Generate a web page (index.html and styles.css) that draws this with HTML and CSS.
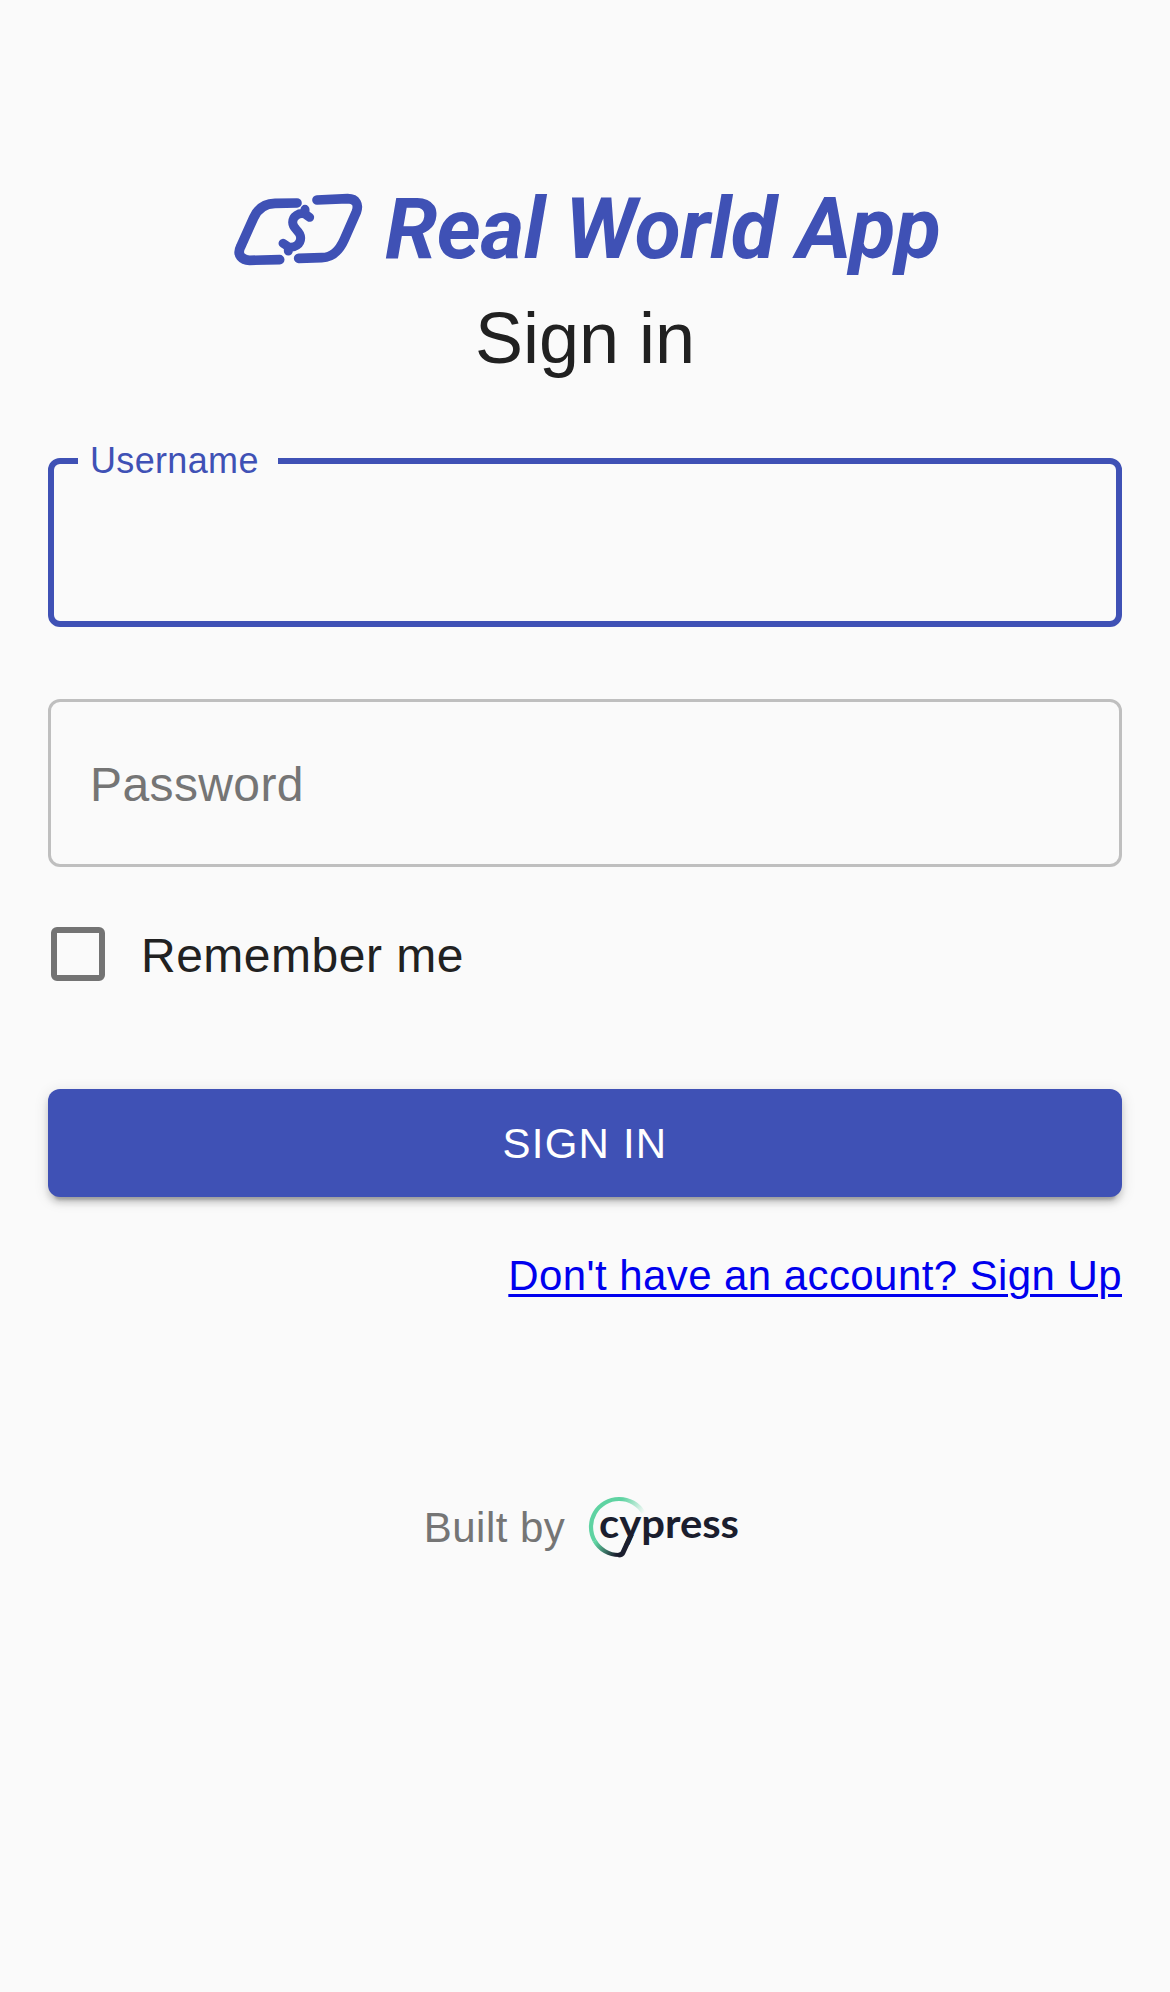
FILE: index.html
```html
<!DOCTYPE html>
<html lang="en">
<head>
<meta charset="utf-8">
<title>Real World App</title>
<link rel="stylesheet" href="styles.css">
</head>
<body>
<main class="page">
  <svg class="brand" viewBox="0 0 720 100" role="img" aria-label="Real World App">
    <g class="brand-mark" transform="scale(.33333)">
      <path d="M216 69 L150 70 C118 71 98 86 86 113 L47 200 C34 226 52 240 74 241 L164 239"/>
      <path d="M276 60 L368 56 C394 56 402 74 394 96 L358 178 C342 214 322 232 290 233 L221 235"/>
      <path class="dollar" d="M254 112 L240 102 C222 97 203 108 203 127 C203 150 227 150 227 174 C227 194 208 204 191 201 L174 190 M240 88 V102 M190 213 V200"/>
    </g>
    <text class="brand-name" x="160" y="78.3" textLength="556">Real World App</text>
  </svg>
  <h1 class="title">Sign in</h1>
  <form class="form">
    <div class="field field-focused"><label class="field-label">Username</label></div>
    <div class="field"><label class="field-label">Password</label></div>
    <label class="remember"><span class="checkbox"></span><span class="remember-text">Remember me</span></label>
    <button class="submit" type="button">Sign In</button>
    <a class="signup" href="#">Don't have an account? Sign Up</a>
  </form>
  <footer class="footer">
    <span class="built">Built by</span>
    <svg class="cypress" viewBox="0 0 156 66" role="img" aria-label="cypress">
      <defs>
        <linearGradient id="fade" gradientUnits="userSpaceOnUse" x1="36" y1="4" x2="58" y2="18">
          <stop offset="0" stop-color="#5fd3a2"/><stop offset="1" stop-color="#5fd3a2" stop-opacity="0"/>
        </linearGradient>
        <linearGradient id="deep" gradientUnits="userSpaceOnUse" x1="9" y1="48" x2="30" y2="60">
          <stop offset="0" stop-color="#5fd3a2"/><stop offset="1" stop-color="#1b1e2e"/>
        </linearGradient>
      </defs>
      <g transform="translate(0 -1)">
        <path class="ring" stroke="url(#fade)" d="M32 5 A28 28 0 0 1 56.500 19"/>
        <path class="ring" stroke="#5fd3a2" d="M7.750 47 A28 28 0 0 1 32.100 5"/>
        <path class="ring" stroke="url(#deep)" d="M7.700 46.900 A28 28 0 0 0 32 61"/>
        <path class="tail" d="M44.500 40 L36 58.500 Q35 61 31.500 61"/>
      </g>
      <text class="cypress-name" x="12" y="43.3" textLength="140" lengthAdjust="spacingAndGlyphs">cypress</text>
    </svg>
  </footer>
</main>
</body>
</html>
```
FILE: styles.css
```css
* { box-sizing: border-box; }
body { margin: 0; background: #fafafa; color: #212121; font-family: "Liberation Sans", Arial, sans-serif; }
.page { min-height: 1992px; padding: 180px 48px 0; display: flex; flex-direction: column; align-items: center; }
.brand { width: 720px; height: 100px; flex: none; }
.brand-mark { fill: none; stroke: #3f51b5; stroke-width: 29; stroke-linecap: round; stroke-linejoin: round; }
.dollar { stroke-width: 27; }
.brand-name { font: italic 700 84.4px Roboto, sans-serif; fill: #3f51b5; }
.title { margin: 10px 0 0; font-size: 72px; font-weight: 400; line-height: 96px; }
.form { width: 100%; margin-top: 72px; display: flex; flex-direction: column; }
.field { height: 168px; margin-bottom: 60px; padding: 3px 39px 0; display: flex; align-items: center; border: 3px solid #bfbfbf; border-radius: 12px; }
.field-label { font-size: 48px; line-height: 48px; letter-spacing: .4px; color: #757575; }
.field-focused { position: relative; height: 169px; margin-bottom: 72px; border: 6px solid #3f51b5; }
.field-focused .field-label { position: absolute; left: 24px; top: -24px; width: 200px; padding-left: 12px; background: #fafafa; font-size: 36px; line-height: 42px; letter-spacing: .34px; color: #3f51b5; }
.remember { display: flex; align-items: center; height: 54px; padding-left: 3px; gap: 36px; }
.checkbox { width: 54px; height: 54px; border: 6px solid #737373; border-radius: 6px; }
.remember-text { padding-top: 3px; font-size: 48px; line-height: 72px; letter-spacing: .5px; }
.submit { margin-top: 108px; height: 108px; padding: 2px 0 0; border: 0; border-radius: 12px; background: #3f51b5; color: #fff; font: 400 42px/72px "Liberation Sans", Arial, sans-serif; letter-spacing: 1.2px; text-transform: uppercase; box-shadow: 0 9px 3px -6px rgba(0,0,0,.2), 0 6px 6px 0 rgba(0,0,0,.14), 0 3px 15px 0 rgba(0,0,0,.12); }
.signup { align-self: flex-end; margin-top: 49px; font-size: 42px; line-height: 60px; letter-spacing: .42px; color: #00e; text-decoration-thickness: 3px; text-underline-offset: 4px; }
.footer { margin: 189px 3px 0 0; display: flex; align-items: center; gap: 22px; }
.built { font-size: 42px; line-height: 60px; letter-spacing: .45px; color: #757575; }
.cypress { width: 156px; height: 66px; }
.ring { fill: none; stroke-width: 4.200px; }
.tail { fill: none; stroke: #1b1e2e; stroke-width: 5px; }
.cypress-name { font: 700 39.5px Lato, sans-serif; fill: #1b1e2e; }
```
